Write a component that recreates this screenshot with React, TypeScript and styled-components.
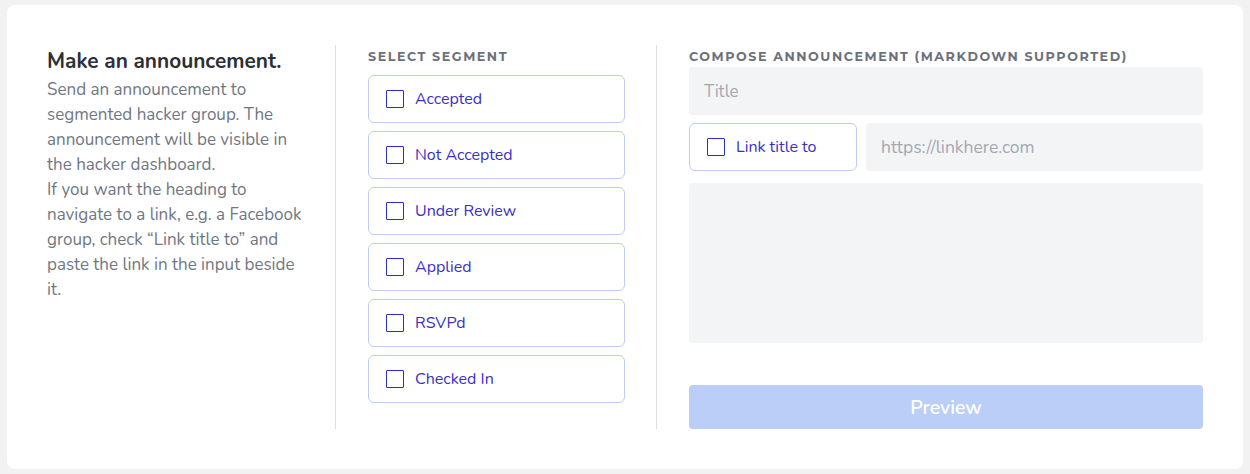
import React from "react";
import styled, { createGlobalStyle } from "styled-components";

const Global = createGlobalStyle`
  html, body { margin: 0; padding: 0; }
  body {
    background: #f2f2f2;
    padding: 5px 7px;
    font-family: "Nunito", "Lato", "Noto Sans", sans-serif;
  }
  * { box-sizing: border-box; }
`;

const Card = styled.div`
  background: #ffffff;
  border-radius: 8px;
  height: 464px;
  padding: 40px;
  display: flex;
  align-items: stretch;
`;

const IntroColumn = styled.div`
  width: 289px;
  padding-right: 32px;
  border-right: 1px solid #dddddd;
`;

const SegmentColumn = styled.div`
  width: 321px;
  padding: 0 31px 0 32px;
  border-right: 1px solid #dddddd;
  display: flex;
  flex-direction: column;
`;

const ComposeColumn = styled.div`
  flex: 1;
  padding-left: 32px;
  display: flex;
  flex-direction: column;
`;

const Heading = styled.h2`
  margin: 3px 0 3px;
  font-size: 20.8px;
  line-height: 26px;
  font-weight: 700;
  color: #2b2f36;
`;

const Description = styled.p`
  margin: 0;
  font-size: 17px;
  line-height: 25px;
  color: #707782;
`;

const SectionLabel = styled.div<{ $gap?: number }>`
  font-family: "Montserrat", "DejaVu Sans", sans-serif;
  font-size: 12.7px;
  font-weight: 700;
  letter-spacing: 1.55px;
  color: #6b717b;
  height: 22px;
  line-height: 24px;
  margin-bottom: ${(p) => p.$gap ?? 0}px;
  white-space: nowrap;
`;

const OptionList = styled.div`
  display: flex;
  flex-direction: column;
  gap: 8px;
`;

const OptionBox = styled.label<{ $width?: number }>`
  display: flex;
  align-items: center;
  gap: 11px;
  height: 48px;
  padding: 0 17px;
  border: 1px solid #bccdf6;
  border-radius: 6px;
  background: #ffffff;
  width: ${(p) => (p.$width ? `${p.$width}px` : "auto")};
  flex-shrink: 0;
  cursor: pointer;
`;

const CheckSquare = styled.span`
  width: 18px;
  height: 18px;
  border: 1.5px solid #2332c2;
  border-radius: 1px;
  flex-shrink: 0;
`;

const OptionText = styled.span`
  font-size: 16px;
  color: #3a30c4;
`;

const Field = styled.div<{ $height: number }>`
  height: ${(p) => p.$height}px;
  background: #f3f4f6;
  border-radius: 4px;
  padding: 0 15px;
  display: flex;
  align-items: center;
  font-size: 17px;
  color: #a3a8b0;
`;

const TextArea = styled.div`
  height: 160px;
  background: #f3f4f6;
  border-radius: 4px;
  margin-top: 12px;
`;

const LinkRow = styled.div`
  display: flex;
  gap: 9px;
  margin-top: 8px;
`;

const UrlField = styled(Field)`
  flex: 1;
  font-size: 17.5px;
`;

const PreviewButton = styled.button`
  margin-top: auto;
  height: 44px;
  width: 100%;
  border: none;
  border-radius: 4px;
  background: #bbcef7;
  color: #ffffff;
  font-family: "Nunito", "Lato", "Noto Sans", sans-serif;
  font-size: 19.5px;
  font-weight: 600;
`;

const segments = [
  "Accepted",
  "Not Accepted",
  "Under Review",
  "Applied",
  "RSVPd",
  "Checked In",
];

export default function App() {
  return (
    <>
      <Global />
      <Card>
        <IntroColumn>
          <Heading>Make an announcement.</Heading>
          <Description>
            Send an announcement to segmented hacker group. The announcement
            will be visible in the hacker dashboard.
            <br />
            If you want the heading to navigate to a link, e.g. a Facebook
            group, check “Link title to” and paste the link in the input beside
            it.
          </Description>
        </IntroColumn>
        <SegmentColumn>
          <SectionLabel $gap={8}>SELECT SEGMENT</SectionLabel>
          <OptionList>
            {segments.map((s) => (
              <OptionBox key={s}>
                <CheckSquare />
                <OptionText>{s}</OptionText>
              </OptionBox>
            ))}
          </OptionList>
        </SegmentColumn>
        <ComposeColumn>
          <SectionLabel>COMPOSE ANNOUNCEMENT (MARKDOWN SUPPORTED)</SectionLabel>
          <Field $height={48}>Title</Field>
          <LinkRow>
            <OptionBox $width={168}>
              <CheckSquare />
              <OptionText>Link title to</OptionText>
            </OptionBox>
            <UrlField $height={48}>https://linkhere.com</UrlField>
          </LinkRow>
          <TextArea />
          <PreviewButton>Preview</PreviewButton>
        </ComposeColumn>
      </Card>
    </>
  );
}
